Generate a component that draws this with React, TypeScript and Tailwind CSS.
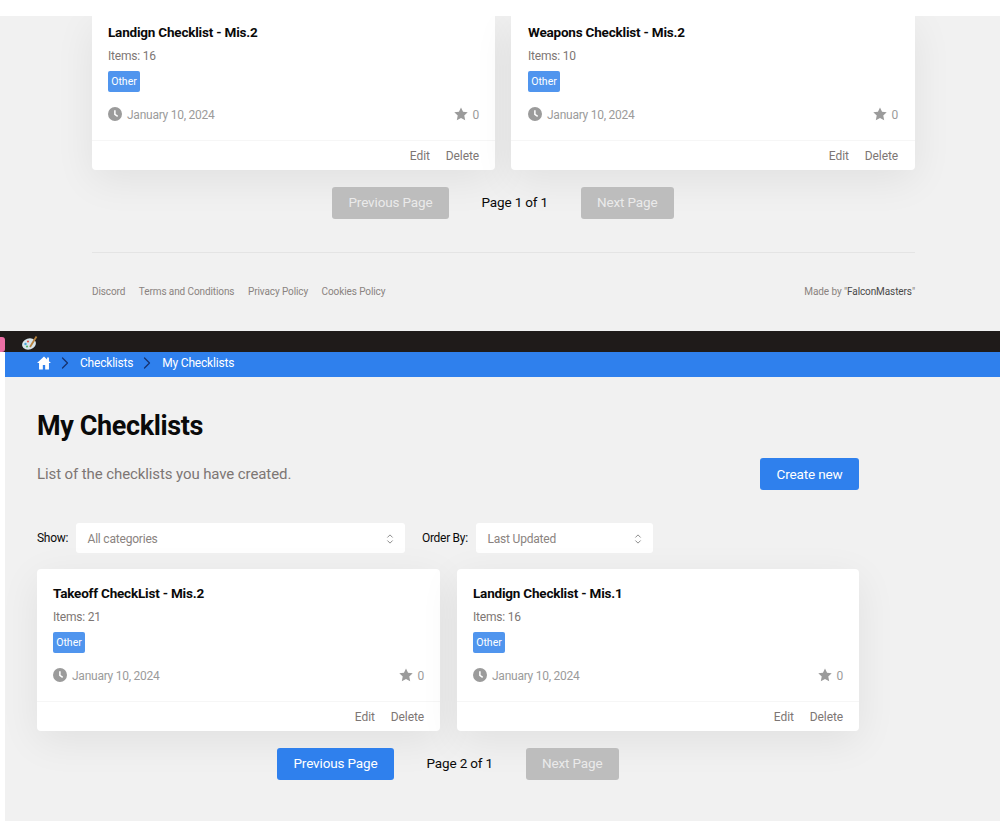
import { ChevronRight } from 'lucide-react';

const font = { fontFamily: 'Roboto, sans-serif' };

function ClockIcon() {
  return (
    <svg viewBox="0 0 24 24" className="-mt-[2px] h-[14px] w-[14px] shrink-0" fill="#9b9b9b">
      <path d="M12 0a12 12 0 1 0 0 24 12 12 0 0 0 0-24zm3.800 17.200-5.300-4V5.500h2.600v6.400l4.300 3.200z" />
    </svg>
  );
}

function StarIcon() {
  return (
    <svg viewBox="0 0 24 24" className="-mt-[3px] h-[14px] w-[14px] shrink-0" fill="#9b9b9b">
      <path d="M12 .8l3.500 7.400 8 1-5.900 5.500 1.600 8L12 18.800l-7.200 3.900 1.600-8L.5 9.200l8-1z" />
    </svg>
  );
}

function HomeIcon() {
  return (
    <svg viewBox="0 0 24 24" className="h-[14px] w-[14px]" fill="#ffffff">
      <path d="M12 1 0 12h3.500v11h6.500v-7.500h4V23h6.500V12H24l-3.500-3.200V2.500h-3.200v3.400z" />
    </svg>
  );
}

function Selector() {
  return (
    <svg viewBox="0 0 10 16" className="h-[12px] w-[8px]" fill="none" stroke="#8a8a8a" strokeWidth="1.300">
      <path d="M1.500 6 5 2.500 8.500 6M1.500 10 5 13.500 8.500 10" />
    </svg>
  );
}

function Palette() {
  return (
    <svg viewBox="0 0 16 16" className="h-[16px] w-[16px]">
      <ellipse cx="7" cy="9" rx="7" ry="5.500" fill="#d7e4ea" transform="rotate(-18 7 9)" />
      <circle cx="3.500" cy="9" r="1.200" fill="#4aa3d8" />
      <circle cx="6" cy="6.500" r="1.100" fill="#e2574c" />
      <circle cx="5" cy="11.500" r="1.100" fill="#57b36a" />
      <path d="M8 12 14.500 1.500" stroke="#b8833f" strokeWidth="1.800" />
    </svg>
  );
}

function Card({
  title,
  items,
  clipped,
  first,
  wide,
}: {
  title: string;
  items: number;
  clipped?: boolean;
  first?: boolean;
  wide?: boolean;
}) {
  const pad = wide ? 'px-[17px]' : 'px-[16px]';
  return (
    <div
      className={`bg-white shadow-[0_10px_40px_rgba(0,0,0,0.07)] ${clipped ? 'rounded-b-[4px]' : 'rounded-[4px]'} ${first ? 'w-[403px] shrink-0' : 'flex-1'}`}
    >
      <div className={pad}>
        <h3
          className={`text-[13.5px] leading-[17px] font-bold tracking-[-0.2px] text-[#0a0a0a] ${clipped ? 'pt-[8px]' : 'pt-[16px]'}`}
        >
          {title}
        </h3>
        <p className="mt-[7px] text-[12px] leading-[16px] tracking-[-0.22px] text-[#7d7674]">Items: {items}</p>
        <span className="mt-[7px] block h-[21px] w-[32px] rounded-[2px] bg-[#5095ee] text-center text-[10.5px] leading-[21px] text-white">
          Other
        </span>
        <div className="mt-[15px] flex h-[16px] items-center justify-between text-[12px] tracking-[-0.25px] text-[#9b9b9b]">
          <span className="flex items-center gap-[5px]">
            <ClockIcon />
            January 10, 2024
          </span>
          <span className="flex items-center gap-[5px]">
            <StarIcon />0
          </span>
        </div>
      </div>
      <div
        className={`mt-[17px] flex h-[30px] items-center justify-end gap-[16px] border-t border-[#f6f6f6] text-[12px] tracking-[-0.1px] text-[#7d7674] ${pad}`}
      >
        <span>Edit</span>
        <span>Delete</span>
      </div>
    </div>
  );
}

function Pager({ page, prevActive }: { page: number; prevActive: boolean }) {
  return (
    <div className="flex items-center justify-center text-[13.5px] tracking-[-0.14px]">
      <button
        className={`h-[32px] w-[116.5px] rounded-[3px] pb-[1px] tracking-[-0.14px] ${prevActive ? 'bg-[#2f80ed] text-white' : 'bg-[#bdbdbd] text-white/70'}`}
      >
        Previous Page
      </button>
      <span className="w-[132px] pb-[1px] text-center text-[#0a0a0a]">Page {page} of 1</span>
      <button className="h-[32px] w-[93px] rounded-[3px] bg-[#bdbdbd] pb-[1px] tracking-[-0.14px] text-white/70">
        Next Page
      </button>
    </div>
  );
}

export default function App() {
  return (
    <div className="h-[821px] w-[1000px] overflow-hidden bg-white" style={font}>
      {/* upper capture */}
      <div className="h-[331px] bg-[#f1f1f1]">
        <div className="relative z-10 h-[16px] bg-white" />
        <div className="mx-[92px] w-[823px]">
          <div className="flex gap-[16px]">
            <Card title="Landign Checklist - Mis.2" items={16} clipped first />
            <Card title="Weapons Checklist - Mis.2" items={10} clipped wide />
          </div>
          <div className="mt-[17px] pr-[1px]">
            <Pager page={1} prevActive={false} />
          </div>
          <div className="mt-[33px] border-t border-[#e4e4e4]" />
          <div className="mt-[32px] flex items-center justify-between text-[10px] leading-[14px] tracking-[-0.1px] text-[#8a8380]">
            <div className="flex gap-[13.5px]">
              <span>Discord</span>
              <span>Terms and Conditions</span>
              <span>Privacy Policy</span>
              <span>Cookies Policy</span>
            </div>
            <span>
              Made by "<span className="text-[#4a4a4a]">FalconMasters</span>"
            </span>
          </div>
        </div>
      </div>

      {/* taskbar strip */}
      <div className="flex h-[21px] items-end bg-[#1f1b1a]">
        <div className="h-[15px] w-[5px] rounded-r-[3px] bg-[#ec6fa5]" />
        <div className="mb-[1px] ml-[17px]">
          <Palette />
        </div>
      </div>

      {/* lower capture */}
      <div className="ml-[5px] h-[469px] bg-[#f1f1f1]">
        <div className="flex h-[25px] items-center bg-[#2f80ed] pb-[4px] pl-[32px] text-[12px] tracking-[-0.2px] text-white">
          <HomeIcon />
          <ChevronRight className="mr-[5px] ml-[4px] h-[20px] w-[20px] text-[#16326e]" strokeWidth={1.500} />
          <span>Checklists</span>
          <ChevronRight className="mr-[5px] ml-[4px] h-[20px] w-[20px] text-[#16326e]" strokeWidth={1.500} />
          <span>My Checklists</span>
        </div>
        <div className="w-[854px] pl-[32px]">
          <h1 className="mt-[32px] text-[27px] leading-[34px] font-bold tracking-[-0.38px] text-[#0a0a0a]">
            My Checklists
          </h1>
          <div className="mt-[15px] flex items-center justify-between">
            <p className="text-[15px] tracking-[-0.1px] text-[#7d7674]">List of the checklists you have created.</p>
            <button className="h-[32px] w-[99px] rounded-[3px] bg-[#2f80ed] text-[13.5px] tracking-[-0.14px] text-white">
              Create new
            </button>
          </div>
          <div className="mt-[33px] flex items-center text-[12px] tracking-[-0.3px] text-[#0a0a0a]">
            <span className="w-[31px]">Show:</span>
            <div className="ml-[8px] flex h-[30px] w-[329px] items-center justify-between rounded-[3px] bg-white pt-[1px] pr-[11px] pl-[11.5px] tracking-[-0.2px] text-[#8a8380]">
              All categories
              <Selector />
            </div>
            <span className="ml-[17px] w-[46px]">Order By:</span>
            <div className="ml-[8px] flex h-[30px] w-[177px] items-center justify-between rounded-[3px] bg-white pt-[1px] pr-[11px] pl-[11.5px] tracking-[-0.2px] text-[#8a8380]">
              Last Updated
              <Selector />
            </div>
          </div>
          <div className="mt-[16px] flex gap-[17px]">
            <Card title="Takeoff CheckList - Mis.2" items={21} first />
            <Card title="Landign Checklist - Mis.1" items={16} />
          </div>
          <div className="mt-[17px]">
            <Pager page={2} prevActive />
          </div>
        </div>
      </div>
    </div>
  );
}
